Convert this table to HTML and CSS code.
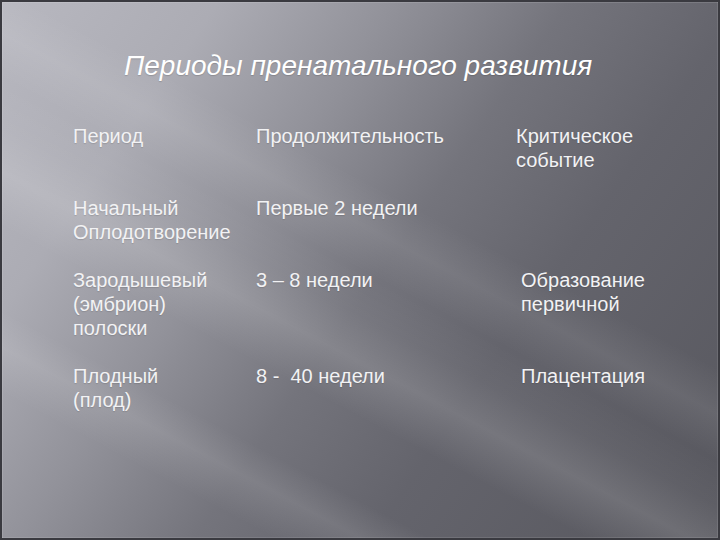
FILE: index.html
```
<!DOCTYPE html>
<html lang="ru">
<head>
<meta charset="utf-8">
<title>Периоды пренатального развития</title>
<link rel="stylesheet" href="styles.css">
</head>
<body>
<div class="slide">
  <h1 class="title">Периоды пренатального развития</h1>
  <div class="table">
    <div class="cell">Период</div>
    <div class="cell">Продолжительность</div>
    <div class="cell c3">Критическое<br>событие</div>

    <div class="cell">Начальный<br>Оплодотворение</div>
    <div class="cell">Первые 2 недели</div>
    <div class="cell c3"></div>

    <div class="cell">Зародышевый<br>(эмбрион)<br>полоски</div>
    <div class="cell">3 – 8 недели</div>
    <div class="cell c3 shift">Образование<br>первичной</div>

    <div class="cell">Плодный<br>(плод)</div>
    <div class="cell">8 -&nbsp; 40 недели</div>
    <div class="cell c3 shift">Плацентация</div>
  </div>
</div>
</body>
</html>
```
FILE: styles.css
```
html, body {
  margin: 0;
  padding: 0;
}
body {
  width: 720px;
  height: 540px;
  overflow: hidden;
  background: #55555c;
}
.slide {
  box-sizing: border-box;
  width: 720px;
  height: 540px;
  padding: 51px 0 0 73px;
  font-family: "Liberation Sans", Arial, sans-serif;
  color: #f2f2f4;
  background:
    linear-gradient(28deg,
      rgba(255,255,255,0) 0%,
      rgba(255,255,255,0) 16%,
      rgba(255,255,255,0.10) 21%,
      rgba(255,255,255,0) 25%,
      rgba(255,255,255,0) 34%,
      rgba(255,255,255,0.13) 40%,
      rgba(255,255,255,0.04) 45%,
      rgba(255,255,255,0) 50%,
      rgba(255,255,255,0.08) 55%,
      rgba(255,255,255,0) 60%,
      rgba(255,255,255,0) 100%),
    linear-gradient(125deg,
      #b8b8c0 0%,
      #acacb4 20%,
      #92929a 36%,
      #74747c 52%,
      #64646c 68%,
      #57575e 100%);
  box-shadow:
    inset 2px 0 0 #3a3a40,
    inset -2px 0 0 #3a3a40,
    inset 0 2px 0 #3a3a40,
    inset 0 -2px 0 #3a3a40,
    inset 5px 5px 0 -2px rgba(255,255,255,0.12),
    inset -5px -5px 0 -2px rgba(255,255,255,0.10);
}
.title {
  margin: 0 0 0 51px;
  font-size: 28px;
  font-weight: normal;
  font-style: italic;
  line-height: 30px;
  color: #ffffff;
  text-shadow: 0 1px 1px rgba(0,0,0,0.15);
}
.table {
  margin-top: 43px;
  display: grid;
  grid-template-columns: 183px 260px 1fr;
  row-gap: 24px;
  font-size: 20px;
  line-height: 24px;
  text-shadow: 0 1px 1px rgba(0,0,0,0.12);
}
.shift {
  padding-left: 5px;
}
```
